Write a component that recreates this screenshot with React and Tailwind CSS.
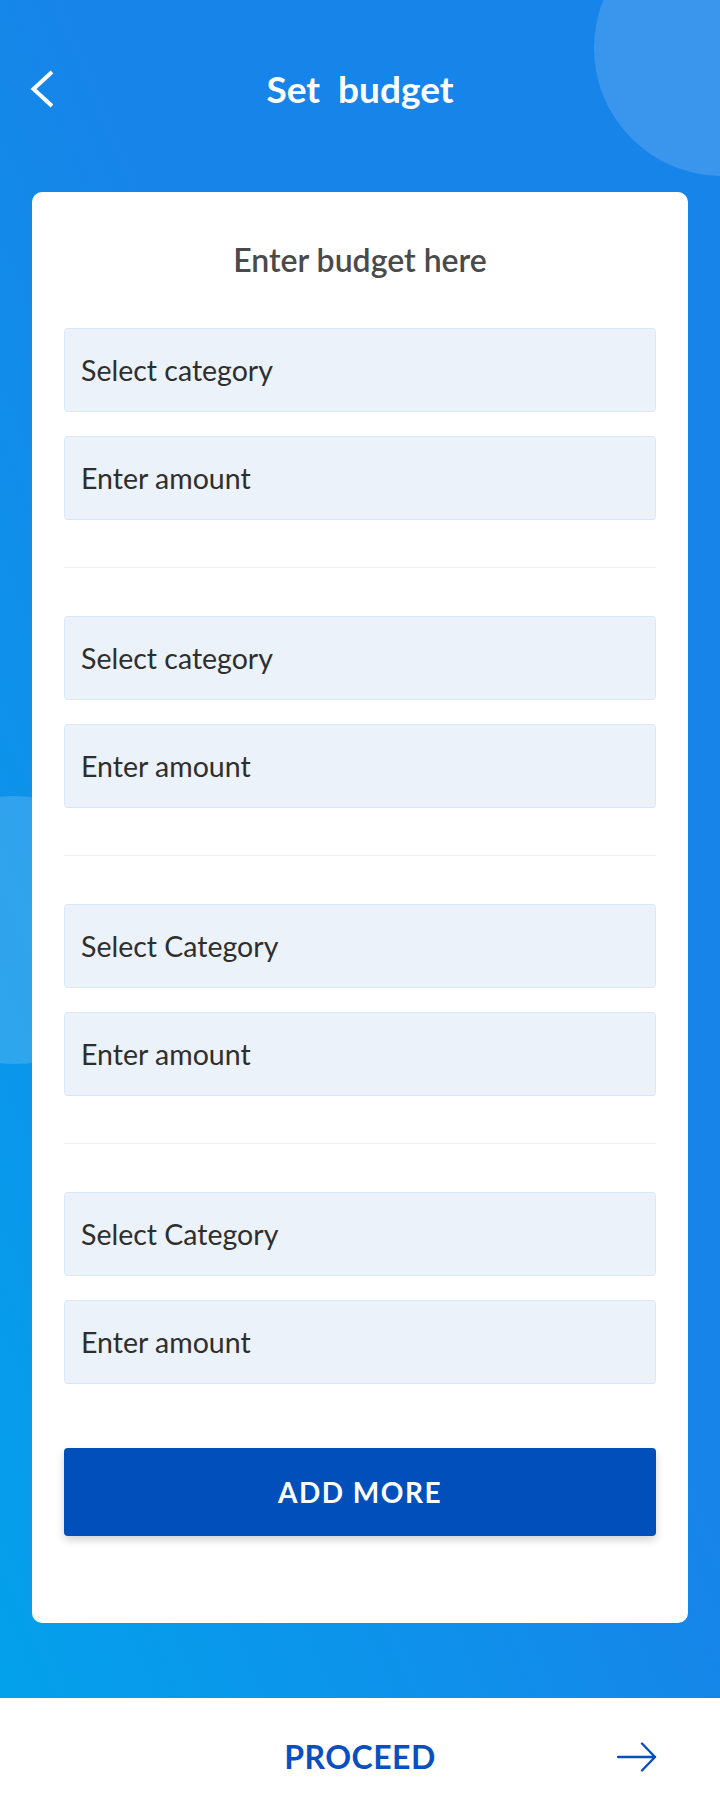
import React from 'react'

const font = {fontFamily: 'Lato, "Open Sans", sans-serif'}

const Field = ({label}) => (
  <div className="h-[84px] flex items-center px-4 rounded-[4px] bg-[#ebf2f9] border border-[#dce8f4] text-[28.5px] text-[#2e2e2e]">
    {label}
  </div>
)

const Group = ({category, last}) => (
  <div className="flex flex-col">
    <div className="flex flex-col gap-6">
      <Field label={category} />
      <Field label="Enter amount" />
    </div>
    {!last && <div className="mt-[47px] mb-[48px] h-px bg-[#f1f1f1]" />}
  </div>
)

export default function App() {
  const groups = ['Select category', 'Select category', 'Select Category', 'Select Category']

  return (
    <div className="w-[720px] min-h-[1816px] flex flex-col bg-white" style={font}>
      <div className="relative overflow-hidden bg-[linear-gradient(to_bottom_left,#1784e9_45%,#03a1ec_100%)] pb-[75px]">
        {/* decorative circles */}
        <div className="absolute left-[594px] top-[-80px] w-[256px] h-[256px] rounded-full bg-white/15" />
        <div className="absolute left-[-120px] top-[796px] w-[268px] h-[268px] rounded-full bg-white/15" />

        <div className="relative h-[192px] pb-[14px] grid grid-cols-[1fr_auto_1fr] items-center">
          <div className="pl-[30px]">
            <svg width="24" height="40" viewBox="0 0 24 40" fill="none">
              <path d="M22 3 L3.5 20 L22 37" stroke="white" strokeWidth="4" strokeLinejoin="miter" />
            </svg>
          </div>
          <div className="text-white font-bold text-[37px] whitespace-pre">Set  budget</div>
          <div />
        </div>

        <div className="relative mx-[32px] bg-white rounded-[10px] px-8 pt-[50px] pb-[87px]">
          <div className="text-center text-[32px] leading-[36px] font-semibold text-[#4a4a4a] mb-[50px]">
            Enter budget here
          </div>
          {groups.map((g, i) => (
            <Group key={i} category={g} last={i === groups.length - 1} />
          ))}
          <button className="mt-16 w-full h-[88px] rounded-[4px] bg-[#004fbb] text-white font-bold text-[28px] tracking-[1.5px] shadow-[0_4px_8px_rgba(0,0,0,0.18)]">
            ADD MORE
          </button>
        </div>
      </div>

      <div className="h-[118px] grid grid-cols-[1fr_auto_1fr] items-center">
        <div />
        <div className="text-[#0a4fbf] font-bold text-[32px] tracking-[0.5px]">PROCEED</div>
        <div className="flex justify-end pr-[63px]">
          <svg width="40" height="30" viewBox="0 0 40 30" fill="none">
            <path d="M1 15 H38 M25 1.5 L38 15 L25 28.5" stroke="#0a4fbf" strokeWidth="2.4" strokeLinecap="round" strokeLinejoin="round" />
          </svg>
        </div>
      </div>
    </div>
  )
}
